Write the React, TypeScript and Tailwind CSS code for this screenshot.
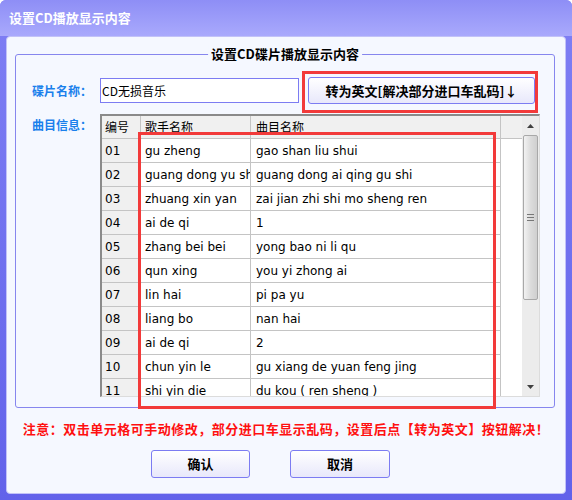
import React from "react";

const cjk = "font-['Noto_Sans_CJK_SC',sans-serif]";
const latin = "font-['DejaVu_Sans','Noto_Sans_CJK_SC',sans-serif]";

const rows: [string, string, string][] = [
  ["01", "gu zheng", "gao shan liu shui"],
  ["02", "guang dong yu shi", "guang dong ai qing gu shi"],
  ["03", "zhuang xin yan", "zai jian zhi shi mo sheng ren"],
  ["04", "ai de qi", "1"],
  ["05", "zhang bei bei", "yong bao ni li qu"],
  ["06", "qun xing", "you yi zhong ai"],
  ["07", "lin hai", "pi pa yu"],
  ["08", "liang bo", "nan hai"],
  ["09", "ai de qi", "2"],
  ["10", "chun yin le", "gu xiang de yuan feng jing"],
  ["11", "shi yin die", "du kou ( ren sheng )"],
];

function Btn({ label, className = "" }: { label: string; className?: string }) {
  return (
    <button
      className={`flex items-center justify-center rounded-[3px] border border-[#7c7cf2] bg-gradient-to-b from-white to-[#e8e8fb] text-[13px] font-bold text-black ${cjk} ${className}`}
    >
      {label}
    </button>
  );
}

function Scrollbar() {
  return (
    <div className="flex w-[17px] flex-col bg-[#ececec]">
      <div className="flex h-[19px] items-center justify-center">
        <svg width="7" height="4" viewBox="0 0 7 4">
          <path d="M0 4 L3.5 0 L7 4 Z" fill="#404040" />
        </svg>
      </div>
      <div className="mx-[1px] flex h-[165px] items-center justify-center rounded-[2px] border border-[#a8a8a8] bg-gradient-to-r from-[#f2f2f2] via-[#dcdcdc] to-[#cfcfcf]">
        <div className="flex flex-col gap-[2px]">
          <div className="h-[1px] w-[7px] bg-[#777]" />
          <div className="h-[1px] w-[7px] bg-[#777]" />
          <div className="h-[1px] w-[7px] bg-[#777]" />
        </div>
      </div>
      <div className="flex-1" />
      <div className="flex h-[19px] items-center justify-center">
        <svg width="7" height="4" viewBox="0 0 7 4">
          <path d="M0 0 L3.5 4 L7 0 Z" fill="#404040" />
        </svg>
      </div>
    </div>
  );
}

function Grid() {
  return (
    <div className="relative h-full w-[420px] overflow-hidden bg-white">
      <div className="flex h-[23px] border-b border-[#c4c4c4] bg-[#f0f0f0] text-[12px] text-black">
        <div className={`flex w-[39px] items-center border-r border-[#c4c4c4] pl-[3px] ${cjk}`}>编号</div>
        <div className={`flex w-[110px] items-center border-r border-[#c4c4c4] pl-[4px] ${cjk}`}>歌手名称</div>
        <div className={`flex w-[250px] items-center border-r border-[#c4c4c4] pl-[5px] ${cjk}`}>曲目名称</div>
      </div>
      {rows.map(([no, singer, song]) => (
        <div key={no} className={`flex h-[24px] text-[12px] text-black ${latin}`}>
          <div className="flex w-[39px] items-center border-r border-b border-[#c4c4c4] bg-[#f0f0f0] pl-[3px]">{no}</div>
          <div className="flex w-[110px] items-center overflow-hidden whitespace-nowrap border-r border-b border-[#c4c4c4] pl-[4px]">
            {singer}
          </div>
          <div className="flex w-[250px] items-center whitespace-nowrap border-r border-b border-[#c4c4c4] pl-[5px]">
            {song}
          </div>
        </div>
      ))}
    </div>
  );
}

export default function App() {
  return (
    <div className="relative flex h-[500px] w-[572px] flex-col overflow-hidden rounded-t-[6px] bg-gradient-to-b from-[#7f7ff4] to-[#6262ea]">
      {/* title bar */}
      <div className="flex h-[36px] items-center bg-gradient-to-b from-[#8e8ef6] to-[#a9a9fc] pl-[9px]">
        <span className={`text-[13px] font-bold text-white ${cjk}`}>设置CD播放显示内容</span>
      </div>

      {/* client area */}
      <div className="mx-[6px] mb-[6px] flex flex-1 flex-col rounded-[4px] border border-[#c2c2f8] bg-[#f5f8ff]">
        {/* group box */}
        <div className="relative ml-[8px] mt-[17px] h-[354px] w-[540px] rounded-[3px] border border-[#8686ee] pl-[16px] pt-[22px]">
          <span
            className={`absolute left-1/2 top-[-10px] -translate-x-1/2 bg-[#f5f8ff] px-[3px] text-[13px] font-bold leading-[18px] text-black ${cjk}`}
          >
            设置CD碟片播放显示内容
          </span>

          <div className="flex items-center">
            <span className={`w-[68px] text-[12px] font-bold text-[#1a80ec] ${cjk}`}>碟片名称：</span>
            <div className={`flex h-[25px] w-[199px] items-center border border-[#7c7cf2] bg-white pl-[1px] text-[12px] text-black ${cjk}`}>
              CD无损音乐
            </div>
            <Btn label="转为英文[解决部分进口车乱码]↓" className="ml-[9px] h-[27px] w-[227px]" />
          </div>

          <div className="mt-[10px] flex items-start">
            <span className={`w-[68px] pt-[2px] text-[12px] font-bold text-[#1a80ec] ${cjk}`}>曲目信息：</span>
            <div className="flex h-[283px] w-[440px] border-l-2 border-t-2 border-r border-b border-l-[#8a8a8a] border-t-[#8a8a8a] border-r-[#dcdcdc] border-b-[#dcdcdc]">
              <Grid />
              <Scrollbar />
            </div>
          </div>

          {/* red highlight frames */}
          <div className="pointer-events-none absolute left-[286px] top-[16px] h-[42px] w-[236px] border-[3px] border-[#f23a3a]" />
          <div className="pointer-events-none absolute left-[122px] top-[77px] h-[277px] w-[358px] border-[3px] border-[#f23a3a]" />
        </div>

        <p className={`mt-[11px] text-center text-[13px] font-bold tracking-[0.5px] text-[#ff1010] ${cjk}`}>
          注意：双击单元格可手动修改，部分进口车显示乱码，设置后点【转为英文】按钮解决！
        </p>

        <div className="mt-[11px] flex pl-[144px]">
          <Btn label="确认" className="h-[28px] w-[99px]" />
          <Btn label="取消" className="ml-[40px] h-[28px] w-[100px]" />
        </div>
      </div>
    </div>
  );
}
